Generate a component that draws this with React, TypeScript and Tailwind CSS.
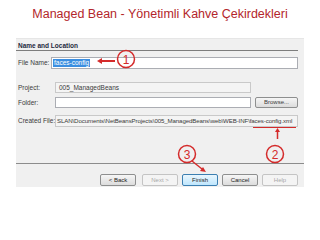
export default function App() {
  const btn =
    "h-[12px] w-[36px] flex items-center justify-center rounded-[2px] border text-[6px] leading-none";
  return (
    <div className="relative w-[320px] h-[240px] overflow-hidden bg-white font-['Liberation_Sans',Arial,sans-serif]">
      <div className="h-[38px] pt-[6px] text-center text-[12.5px] leading-[16px] text-[#b3262b]">
        Managed Bean - Yönetimli Kahve Çekirdekleri
      </div>

      <div className="mx-[16px] flex h-[149px] w-[288px] flex-col border-t border-[#e6e6e6] bg-[#f0f0f0] text-[6.5px] text-[#3a3a3a]">
        <div className="mr-[6px] h-[12px] border-b border-[#7d7d7d] pl-[2px] pt-[3px] font-bold leading-[7px] text-[#1f2a3e]">
          Name and Location
        </div>

        <div className="mt-[6px] flex h-[12px] items-center pl-[2px] pr-[6px]">
          <span className="w-[33px]">File Name:</span>
          <div className="flex h-full flex-1 items-center border border-[#abadb3] bg-white pl-[1px]">
            <span className="bg-[#3b8ee0] px-[1px] leading-[8px] text-white">faces-config</span>
          </div>
        </div>

        <div className="mt-[13px] flex h-[11px] items-center pl-[2px] pr-[6px]">
          <span className="w-[37px]">Project:</span>
          <div className="mr-[47px] flex h-full flex-1 items-center border border-[#c9c9c9] bg-[#f4f4f4] pl-[3px]">
            005_ManagedBeans
          </div>
        </div>

        <div className="mt-[4px] flex h-[11px] items-center pl-[2px] pr-[6px]">
          <span className="w-[37px]">Folder:</span>
          <div className="h-full flex-1 border border-[#abadb3] bg-white" />
          <div className="ml-[4px] flex h-full w-[43px] items-center justify-center rounded-[2px] border border-[#8e8f8f] bg-gradient-to-b from-[#f6f6f6] to-[#dcdcdc] text-[6px]">
            Browse...
          </div>
        </div>

        <div className="mt-[7px] flex h-[12px] items-center pl-[2px] pr-[6px]">
          <span className="w-[37px] whitespace-nowrap">Created File:</span>
          <div className="flex h-full flex-1 items-center overflow-hidden whitespace-nowrap border border-[#c9c9c9] bg-[#f4f4f4] pl-[1px] text-[6.1px] tracking-[-0.1px]">
            SLAN\Documents\NetBeansProjects\005_ManagedBeans\web\WEB-INF\faces-config.xml
          </div>
        </div>

        <div className="mt-[36px] h-px bg-[#8c8c8c]" />

        <div className="mt-[10px] flex justify-end gap-[4px] pr-[6px]">
          <div className={`${btn} mr-[2px] border-[#8e8f8f] bg-gradient-to-b from-[#f6f6f6] to-[#dcdcdc] text-[#222]`}>&lt; Back</div>
          <div className={`${btn} border-[#c4c4c4] bg-[#f4f4f4] text-[#a8a8a8]`}>Next &gt;</div>
          <div className={`${btn} border-[#3c7fb1] bg-gradient-to-b from-[#eaf6fd] to-[#bee6fd] text-[#222]`}>Finish</div>
          <div className={`${btn} border-[#8e8f8f] bg-gradient-to-b from-[#f6f6f6] to-[#dcdcdc] text-[#222]`}>Cancel</div>
          <div className={`${btn} border-[#c4c4c4] bg-[#f4f4f4] text-[#a8a8a8]`}>Help</div>
        </div>
      </div>

      <svg
        className="pointer-events-none absolute inset-0"
        width="320"
        height="240"
        viewBox="0 0 320 240"
      >
        <g stroke="#d42b2b" fill="none" strokeWidth="1.5">
          <circle cx="126" cy="59" r="8.5" />
          <circle cx="275" cy="154" r="8.5" />
          <circle cx="187" cy="154" r="8.5" />
          <line x1="115" y1="61" x2="101" y2="61" strokeWidth="2" />
          <line x1="253" y1="127.5" x2="296" y2="127.5" strokeWidth="1" />
          <line x1="277.5" y1="139" x2="277.5" y2="131" strokeWidth="1.5" />
          <line x1="192" y1="161" x2="202" y2="169" strokeWidth="1.5" />
        </g>
        <g fill="#d42b2b">
          <polygon points="97,61 102,58 102,64" />
          <polygon points="277.5,128 275,132 280,132" />
          <polygon points="206,172 200,171 203,167" />
        </g>
        <g fill="#d42b2b" fontFamily="Liberation Sans, Arial, sans-serif" fontSize="12" textAnchor="middle">
          <text x="126" y="63.5">1</text>
          <text x="275" y="158.5">2</text>
          <text x="187" y="158.5">3</text>
        </g>
      </svg>
    </div>
  );
}
